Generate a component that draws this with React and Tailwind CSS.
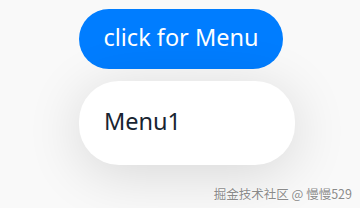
import React from "react";

export default function App() {
  return (
    <div className="relative w-[360px] h-[208px] overflow-hidden bg-[#f9f9f9]" style={{ fontFamily: '"Noto Sans", "Noto Sans CJK SC", sans-serif' }}>
      <div className="flex flex-col items-start pl-[79px] pt-[9px] gap-[12px]">
        <button className="w-[204px] h-[60px] rounded-full bg-[#007dff] text-white text-[23.5px] leading-none flex items-center justify-center pb-[2px]">
          click for Menu
        </button>
        <div className="w-[216px] h-[84px] rounded-[40px] bg-white shadow-[0_8px_56px_rgba(0,0,0,0.14)] flex items-center pl-[25px] pb-[2px] text-[23.5px] text-[#182431]">
          Menu1
        </div>
      </div>
      <div className="absolute right-[8px] bottom-[8px] text-[12.5px] leading-none text-[#8a8a8a] [text-shadow:0_0_2px_#fff,0_0_1px_#fff]" style={{ fontFamily: '"Noto Sans CJK SC", sans-serif' }}>
        掘金技术社区 @ 慢慢529
      </div>
    </div>
  );
}
